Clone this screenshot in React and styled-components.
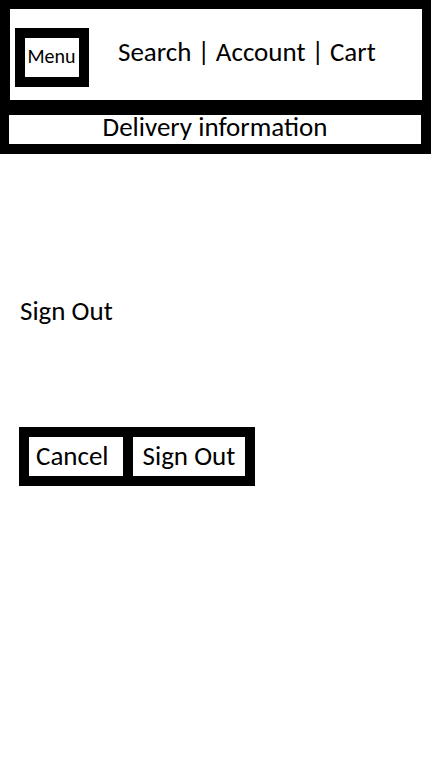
import React from "react";
import styled, { createGlobalStyle } from "styled-components";

const GlobalStyle = createGlobalStyle`
  * { box-sizing: border-box; }
  body {
    margin: 0;
    background: #fff;
    color: #000;
    font: 27px/32px Carlito, Calibri, Lato, sans-serif;
  }
`;

const Header = styled.header`
  display: flex;
  align-items: flex-start;
  padding: 19px 5px 13px;
  border: solid #000;
  border-width: 9px 9px 9px 10px;
`;

const MenuButton = styled.button`
  flex: none;
  padding: 8px 3px 11px 2px;
  border: 10px solid #000;
  background: #fff;
  color: inherit;
  font: inherit;
  font-size: 20px;
  line-height: 20px;
  width: 74px;
`;

const Nav = styled.nav`
  display: flex;
  gap: 6px;
  padding: 8px 0 0 29px;
  white-space: nowrap;
`;

const NavLink = styled.a`
  color: inherit;
  text-decoration: none;
`;

const Delivery = styled.section`
  padding-bottom: 5px;
  border: solid #000;
  border-width: 6px 10px 10px 9px;
  line-height: 24px;
  text-align: center;
`;

const Main = styled.main`
  padding: 141px 19px 0;
`;

const Title = styled.h1`
  margin: 0;
  padding-left: 1px;
  font: inherit;
`;

const Actions = styled.div`
  display: inline-flex;
  gap: 10px;
  margin-top: 100px;
  border: 10px solid #000;
  background: #000;
`;

const ActionButton = styled.button`
  padding: ${({ $wide }) => ($wide ? "3px 10px 4px" : "3px 14px 4px 7px")};
  border: 0;
  background: #fff;
  color: inherit;
  font: inherit;
`;

export default function App() {
  return (
    <>
      <GlobalStyle />
      <Header>
        <MenuButton>Menu</MenuButton>
        <Nav>
          <NavLink href="#search">Search</NavLink>
          <span>|</span>
          <NavLink href="#account">Account</NavLink>
          <span>|</span>
          <NavLink href="#cart">Cart</NavLink>
        </Nav>
      </Header>
      <Delivery>Delivery information</Delivery>
      <Main>
        <Title>Sign Out</Title>
        <Actions>
          <ActionButton>Cancel</ActionButton>
          <ActionButton $wide>Sign Out</ActionButton>
        </Actions>
      </Main>
    </>
  );
}
